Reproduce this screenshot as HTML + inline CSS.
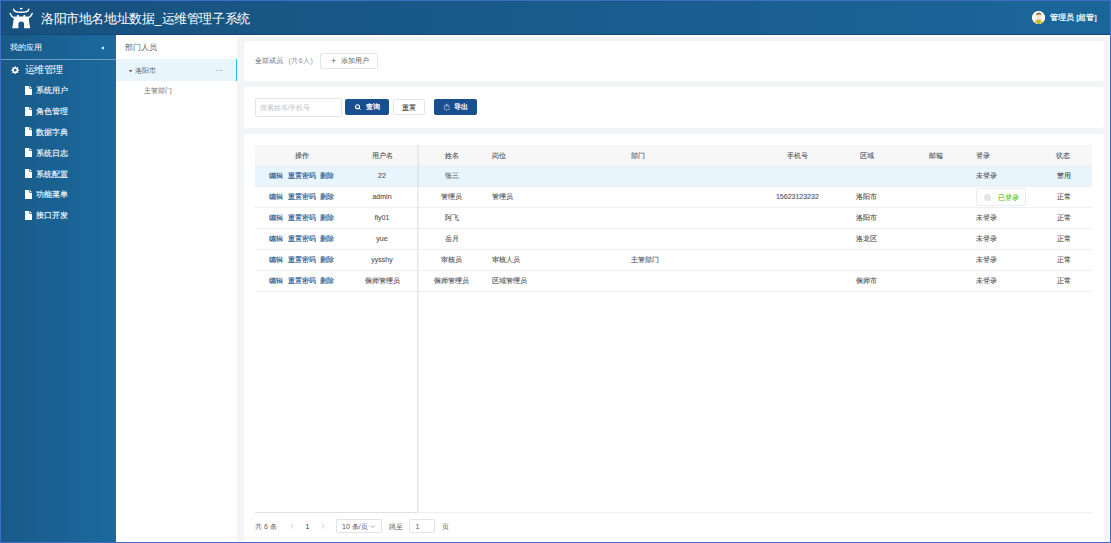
<!DOCTYPE html>
<html><head><meta charset="utf-8">
<style>
*{box-sizing:border-box;margin:0;padding:0}
html,body{width:1111px;height:543px;overflow:hidden;background:#fff}
body{font-family:"Liberation Sans",sans-serif;position:relative;color:#606266}
.abs{position:absolute}
.frame{position:absolute;left:0;top:0;width:1111px;height:543px;border:1px solid #3f6dc6;pointer-events:none;z-index:50}
.hdr{position:absolute;left:0;top:0;width:1111px;height:35px;background:linear-gradient(90deg,#17517f,#1b6699);border-bottom:1px solid #124872}
.title{position:absolute;left:41px;top:10.8px;font-size:26px;line-height:30px;color:#fff;white-space:nowrap;transform:scale(0.485);transform-origin:0 0}
.user{position:absolute;left:1050px;top:12.3px;font-size:8px;line-height:12px;color:#fff;white-space:nowrap;-webkit-text-stroke:0.2px #fff}
.avatar{position:absolute;left:1031.6px;top:10.9px;width:13.5px;height:13.5px;border-radius:50%;background:#fff;overflow:hidden}
.side{position:absolute;left:0;top:35px;width:116px;height:508px;background:linear-gradient(90deg,#195a88,#1b699e)}
.side .app{position:absolute;left:10px;top:42px;font-size:8px;line-height:12px;color:#fff}
.side .line{position:absolute;left:0;top:58px;width:116px;height:1px;background:#6a9cc4}
.mi{position:absolute;left:36px;font-size:8px;line-height:12px;color:#fff;white-space:nowrap;-webkit-text-stroke:0.12px #fff}
.fi{position:absolute;left:25px;width:7px;height:9px;background:#fff;clip-path:polygon(0 0,64% 0,100% 32%,100% 100%,0 100%)}
.fi:after{content:"";position:absolute;left:4.2px;top:0;width:2.8px;height:2.9px;background:#1a5f91;clip-path:polygon(0 0,100% 100%,0 100%)}
.tree{position:absolute;left:116px;top:35px;width:121px;height:508px;background:#fff}
.main{position:absolute;left:237px;top:37px;width:872px;height:504px;background:#f3f4f6}
.card{position:absolute;left:7px;width:860px;background:#fff;border-radius:3px}
.btn{position:absolute;border:1px solid #e2e4e8;border-radius:2px;background:#fff;font-size:7px;line-height:14px;color:#606266;white-space:nowrap}
.pbtn{position:absolute;border-radius:2px;background:#1a4f8f;color:#fff;font-size:7px;white-space:nowrap}
table{border-collapse:collapse}
.tbl{position:absolute;left:12px;top:11px;width:837px}
.th{position:absolute;font-size:7px;line-height:10px;color:#4f5257;-webkit-text-stroke:0.1px currentColor;white-space:nowrap}
.td{position:absolute;font-size:7px;line-height:10px;color:#55585d;-webkit-text-stroke:0.12px currentColor;white-space:nowrap}
.lk{color:#2a5a94;-webkit-text-stroke:0.15px currentColor}
.rowline{position:absolute;left:0;width:837px;height:1px;background:#eeeff1}
</style></head><body>
<div class="hdr">
  <svg class="abs" style="left:6px;top:4px" width="32" height="28" viewBox="0 0 32 28">
    <g fill="#fff">
      <ellipse cx="15.2" cy="4.6" rx="1.45" ry="0.9"/>
    </g>
    <g fill="none" stroke="#fff" stroke-width="1.45" stroke-linecap="round">
      <path d="M7.6 5.3 C8.2 8.2 11 8.3 15.2 8.3 C19.4 8.3 22.2 8.2 22.8 5.3"/>
      <path d="M4.2 9.4 Q5.2 12.3 8.2 13.8"/>
      <path d="M26.2 9.4 Q25.2 12.3 22.2 13.8"/>
    </g>
    <path fill="#fff" d="M8 12.6 L11.1 12.6 L11.1 11.1 L12.9 11.1 L12.9 12.6 L17.5 12.6 L17.5 11.1 L19.3 11.1 L19.3 12.6 L22.7 12.6 Q23 19 24.2 24.2 L18.1 24.2 L18.1 20.4 A2.85 2.85 0 0 0 12.4 20.4 L12.4 24.2 L6.2 24.2 Q7.4 19 8 12.6Z"/>
  </svg>
  <div class="title">洛阳市地名地址数据_运维管理子系统</div>
  <div class="avatar">
    <svg width="13.5" height="13.5" viewBox="0 0 13.5 13.5">
      <circle cx="6.75" cy="6.75" r="6.75" fill="#fff"/>
      <path d="M2.4 13 Q2.6 8.8 5.2 8.3 L8.2 8.3 Q10.8 8.8 11 13Z" fill="#f2c04c"/>
      <path d="M5.2 13 L5.4 8.6 L8 8.6 L8.2 13Z" fill="#9fc43e"/>
      <rect x="5.9" y="7.2" width="1.6" height="1.6" fill="#f8dcc0"/>
      <ellipse cx="6.7" cy="5.6" rx="2.4" ry="2.7" fill="#fce6cf"/>
      <path d="M4 5.2 Q3.6 2 6.4 1.6 Q9.6 1.5 9.4 4.4 Q8.8 3.2 7.4 3.5 Q5.6 3.4 4.6 3.8Z" fill="#a4582b"/>
    </svg>
  </div>
  <div class="user">管理员 [超管]</div>
</div>

<div class="side">
  <div class="app" style="top:7px">我的应用</div>
  <svg class="abs" style="left:100.6px;top:10.7px" width="3" height="4" viewBox="0 0 3 4"><path d="M2.8 0.2 L0.2 2 L2.8 3.8Z" fill="#fff"/></svg>
  <div class="line" style="top:24px"></div>
  <svg class="abs" style="left:11.3px;top:30.8px" width="8.4" height="8.4" viewBox="0 0 16 16"><path fill="#fff" fill-rule="evenodd" d="M13.45 6.69 L15.53 6.99 L15.53 9.01 L13.45 9.31 L12.77 10.93 L14.04 12.61 L12.61 14.04 L10.93 12.77 L9.31 13.45 L9.01 15.53 L6.99 15.53 L6.69 13.45 L5.07 12.77 L3.39 14.04 L1.96 12.61 L3.23 10.93 L2.55 9.31 L0.47 9.01 L0.47 6.99 L2.55 6.69 L3.23 5.07 L1.96 3.39 L3.39 1.96 L5.07 3.23 L6.69 2.55 L6.99 0.47 L9.01 0.47 L9.31 2.55 L10.93 3.23 L12.61 1.96 L14.04 3.39 L12.77 5.07Z M8 5.4 A2.6 2.6 0 1 0 8 10.6 A2.6 2.6 0 1 0 8 5.4Z"/></svg>
  <div class="mi" style="left:25px;top:28.2px;font-size:10px;line-height:13px;letter-spacing:-0.75px;-webkit-text-stroke:0">运维管理</div>
  <svg class="abs" style="left:25px;top:50.8px" width="7" height="9" viewBox="0 0 7 9"><path d="M0 0 L4.3 0 L4.3 2.7 L7 2.7 L7 9 L0 9Z" fill="#fff"/><path d="M5 0.2 L6.9 2.1 L5 2.1Z" fill="#fff"/></svg><div class="mi" style="top:50.4px">系统用户</div>
  <svg class="abs" style="left:25px;top:71.6px" width="7" height="9" viewBox="0 0 7 9"><path d="M0 0 L4.3 0 L4.3 2.7 L7 2.7 L7 9 L0 9Z" fill="#fff"/><path d="M5 0.2 L6.9 2.1 L5 2.1Z" fill="#fff"/></svg><div class="mi" style="top:71.2px">角色管理</div>
  <svg class="abs" style="left:25px;top:92.4px" width="7" height="9" viewBox="0 0 7 9"><path d="M0 0 L4.3 0 L4.3 2.7 L7 2.7 L7 9 L0 9Z" fill="#fff"/><path d="M5 0.2 L6.9 2.1 L5 2.1Z" fill="#fff"/></svg><div class="mi" style="top:92.0px">数据字典</div>
  <svg class="abs" style="left:25px;top:113.2px" width="7" height="9" viewBox="0 0 7 9"><path d="M0 0 L4.3 0 L4.3 2.7 L7 2.7 L7 9 L0 9Z" fill="#fff"/><path d="M5 0.2 L6.9 2.1 L5 2.1Z" fill="#fff"/></svg><div class="mi" style="top:112.8px">系统日志</div>
  <svg class="abs" style="left:25px;top:134.0px" width="7" height="9" viewBox="0 0 7 9"><path d="M0 0 L4.3 0 L4.3 2.7 L7 2.7 L7 9 L0 9Z" fill="#fff"/><path d="M5 0.2 L6.9 2.1 L5 2.1Z" fill="#fff"/></svg><div class="mi" style="top:133.6px">系统配置</div>
  <svg class="abs" style="left:25px;top:154.8px" width="7" height="9" viewBox="0 0 7 9"><path d="M0 0 L4.3 0 L4.3 2.7 L7 2.7 L7 9 L0 9Z" fill="#fff"/><path d="M5 0.2 L6.9 2.1 L5 2.1Z" fill="#fff"/></svg><div class="mi" style="top:154.4px">功能菜单</div>
  <svg class="abs" style="left:25px;top:175.6px" width="7" height="9" viewBox="0 0 7 9"><path d="M0 0 L4.3 0 L4.3 2.7 L7 2.7 L7 9 L0 9Z" fill="#fff"/><path d="M5 0.2 L6.9 2.1 L5 2.1Z" fill="#fff"/></svg><div class="mi" style="top:175.2px">接口开发</div>
</div>

<div class="tree">
  <div class="abs" style="left:9px;top:6.5px;font-size:8px;line-height:12px;color:#606266">部门人员</div>
  <div class="abs" style="left:0;top:24.2px;width:121px;height:21.8px;background:#e8f5fc;border-right:1.2px solid #2dbdea"></div>
  <svg class="abs" style="left:12.8px;top:34.6px" width="3.4" height="2.2" viewBox="0 0 3.4 2.2"><path d="M0 0 L3.4 0 L1.7 2.2Z" fill="#555"/></svg>
  <div class="abs" style="left:19.3px;top:30.5px;font-size:7px;line-height:10px;color:#606266">洛阳市</div>
  <div class="abs" style="left:99.5px;top:31px;font-size:7px;line-height:10px;color:#606266;letter-spacing:0">···</div>
  <div class="abs" style="left:27.5px;top:50.7px;font-size:7px;line-height:10px;color:#606266">主管部门</div>
</div>

<div class="main">
  <div class="card" style="top:4px;height:40px">
    <div class="abs" style="left:11px;top:15px;font-size:7px;line-height:10px;color:#606266">全部成员</div>
    <div class="abs" style="left:44.6px;top:15px;font-size:7px;line-height:10px;color:#909399;letter-spacing:0.45px">(共6人)</div>
    <div class="btn" style="left:76px;top:12px;width:57.5px;height:16.2px">
      <span class="abs" style="left:10px;top:0;font-size:9px;line-height:14px">+</span>
      <span class="abs" style="left:20px;top:0">添加用户</span>
    </div>
  </div>
  <div class="card" style="top:49.5px;height:41.5px">
    <div class="abs" style="left:11px;top:11.5px;width:86.5px;height:18.5px;border:1px solid #e2e4e8;border-radius:2px">
      <span class="abs" style="left:3.5px;top:3.5px;font-size:7px;line-height:10px;color:#c0c4cc;white-space:nowrap">搜索姓名/手机号</span>
    </div>
    <div class="pbtn" style="left:101px;top:12.4px;width:44px;height:16px">
      <svg class="abs" style="left:9px;top:4px" width="8" height="8" viewBox="0 0 8 8"><circle cx="3.5" cy="3.7" r="2" fill="none" stroke="#fff" stroke-width="1.1"/><path d="M4.9 5.1 L6.3 6.6" stroke="#fff" stroke-width="1" stroke-linecap="round"/></svg>
      <span class="abs" style="left:20.5px;top:3.5px;line-height:10px;-webkit-text-stroke:0.25px #fff">查询</span>
    </div>
    <div class="btn" style="left:148.6px;top:12.4px;width:32.4px;height:16.2px">
      <span class="abs" style="left:8.7px;top:3px;line-height:10px;color:#4a4a4a;-webkit-text-stroke:0.1px #4a4a4a">重置</span>
    </div>
    <div class="pbtn" style="left:190px;top:12.4px;width:43.2px;height:16px">
      <svg class="abs" style="left:9px;top:4px" width="8" height="8" viewBox="0 0 8 8"><rect x="1.4" y="2" width="4.8" height="4.8" rx="1.2" fill="none" stroke="rgba(255,255,255,0.6)" stroke-width="0.8"/><path d="M3.8 0.8 L3.8 3.8" stroke="rgba(255,255,255,0.75)" stroke-width="0.8"/></svg>
      <span class="abs" style="left:19.5px;top:3.5px;line-height:10px;-webkit-text-stroke:0.25px #fff">导出</span>
    </div>
  </div>
  <div class="card" style="top:97px;height:420px">
  </div>
</div>

<div class="tblwrap">
<div class="abs" style="left:255px;top:145px;width:837px;height:20.4px;background:#f7f7f7"></div>
<div class="abs" style="left:255px;top:165.4px;width:837px;height:21.1px;background:#e9f5fd"></div>
<div class="rowline" style="left:255px;top:164.9px"></div>
<div class="rowline" style="left:255px;top:186.0px"></div>
<div class="rowline" style="left:255px;top:207.0px"></div>
<div class="rowline" style="left:255px;top:228.0px"></div>
<div class="rowline" style="left:255px;top:249.0px"></div>
<div class="rowline" style="left:255px;top:270.0px"></div>
<div class="rowline" style="left:255px;top:290.8px"></div>
<div class="th" style="left:251.5px;width:100px;text-align:center;top:150.9px">操作</div>
<div class="th" style="left:332.0px;width:100px;text-align:center;top:150.9px">用户名</div>
<div class="th" style="left:401.7px;width:100px;text-align:center;top:150.9px">姓名</div>
<div class="th" style="left:492.4px;top:150.9px">岗位</div>
<div class="th" style="left:630.8px;top:150.9px">部门</div>
<div class="th" style="left:747.4px;width:100px;text-align:center;top:150.9px">手机号</div>
<div class="th" style="left:816.9px;width:100px;text-align:center;top:150.9px">区域</div>
<div class="th" style="left:886.3px;width:100px;text-align:center;top:150.9px">邮箱</div>
<div class="th" style="left:976.4px;top:150.9px">登录</div>
<div class="th" style="left:1056.1px;top:150.9px">状态</div>
<div class="td lk" style="left:269.1px;top:171.0px">编辑</div>
<div class="td lk" style="left:287.6px;top:171.0px">重置密码</div>
<div class="td lk" style="left:319.7px;top:171.0px">删除</div>
<div class="td" style="left:332.0px;width:100px;text-align:center;top:171.1px">22</div>
<div class="td" style="left:401.7px;width:100px;text-align:center;top:171.1px">张三</div>
<div class="td" style="left:976.4px;top:171.1px">未登录</div>
<div class="td" style="left:1056.5px;top:171.1px">禁用</div>
<div class="td lk" style="left:269.1px;top:192.0px">编辑</div>
<div class="td lk" style="left:287.6px;top:192.0px">重置密码</div>
<div class="td lk" style="left:319.7px;top:192.0px">删除</div>
<div class="td" style="left:332.0px;width:100px;text-align:center;top:192.1px">admin</div>
<div class="td" style="left:401.7px;width:100px;text-align:center;top:192.1px">管理员</div>
<div class="td" style="left:492.4px;top:192.1px">管理员</div>
<div class="td" style="left:747.4px;width:100px;text-align:center;top:192.1px">15623123232</div>
<div class="td" style="left:816.9px;width:100px;text-align:center;top:192.1px">洛阳市</div>
<div class="abs" style="left:976.4px;top:188.2px;width:49.4px;height:18.2px;border:1px solid #ecedf0;border-radius:2.5px;background:#fff"></div>
<div class="abs" style="left:984px;top:194px;width:7px;height:7px;border-radius:50%;background:#e4e5e8"></div>
<div class="td" style="left:997.9px;top:192.5px;color:#52c41a">已登录</div>
<div class="td" style="left:1056.5px;top:192.1px">正常</div>
<div class="td lk" style="left:269.1px;top:213.0px">编辑</div>
<div class="td lk" style="left:287.6px;top:213.0px">重置密码</div>
<div class="td lk" style="left:319.7px;top:213.0px">删除</div>
<div class="td" style="left:332.0px;width:100px;text-align:center;top:213.1px">fly01</div>
<div class="td" style="left:401.7px;width:100px;text-align:center;top:213.1px">阿飞</div>
<div class="td" style="left:816.9px;width:100px;text-align:center;top:213.1px">洛阳市</div>
<div class="td" style="left:976.4px;top:213.1px">未登录</div>
<div class="td" style="left:1056.5px;top:213.1px">正常</div>
<div class="td lk" style="left:269.1px;top:234.0px">编辑</div>
<div class="td lk" style="left:287.6px;top:234.0px">重置密码</div>
<div class="td lk" style="left:319.7px;top:234.0px">删除</div>
<div class="td" style="left:332.0px;width:100px;text-align:center;top:234.1px">yue</div>
<div class="td" style="left:401.7px;width:100px;text-align:center;top:234.1px">岳月</div>
<div class="td" style="left:816.9px;width:100px;text-align:center;top:234.1px">洛龙区</div>
<div class="td" style="left:976.4px;top:234.1px">未登录</div>
<div class="td" style="left:1056.5px;top:234.1px">正常</div>
<div class="td lk" style="left:269.1px;top:255.0px">编辑</div>
<div class="td lk" style="left:287.6px;top:255.0px">重置密码</div>
<div class="td lk" style="left:319.7px;top:255.0px">删除</div>
<div class="td" style="left:332.0px;width:100px;text-align:center;top:255.1px">yysshy</div>
<div class="td" style="left:401.7px;width:100px;text-align:center;top:255.1px">审核员</div>
<div class="td" style="left:492.4px;top:255.1px">审核人员</div>
<div class="td" style="left:630.8px;top:255.1px">主管部门</div>
<div class="td" style="left:976.4px;top:255.1px">未登录</div>
<div class="td" style="left:1056.5px;top:255.1px">正常</div>
<div class="td lk" style="left:269.1px;top:276.0px">编辑</div>
<div class="td lk" style="left:287.6px;top:276.0px">重置密码</div>
<div class="td lk" style="left:319.7px;top:276.0px">删除</div>
<div class="td" style="left:332.0px;width:100px;text-align:center;top:276.1px">偃师管理员</div>
<div class="td" style="left:401.7px;width:100px;text-align:center;top:276.1px">偃师管理员</div>
<div class="td" style="left:492.4px;top:276.1px">区域管理员</div>
<div class="td" style="left:816.9px;width:100px;text-align:center;top:276.1px">偃师市</div>
<div class="td" style="left:976.4px;top:276.1px">未登录</div>
<div class="td" style="left:1056.5px;top:276.1px">正常</div>
<div class="abs" style="left:416.5px;top:145px;width:1.2px;height:367px;background:#e6e6e6;box-shadow:1px 0 1.5px rgba(0,0,0,0.07)"></div>
<div class="abs" style="left:255px;top:512px;width:837px;height:1px;background:#eeeff1"></div><div class="abs" style="left:255px;top:512px;width:161.5px;height:1px;background:#dfe0e3"></div>
<div class="td" style="left:255.1px;top:521.8px;-webkit-text-stroke:0;color:#606266">共 6 条</div>
<svg class="abs" style="left:289.5px;top:523px" width="4" height="6" viewBox="0 0 4 6"><path d="M3.2 0.5 L0.8 3 L3.2 5.5" fill="none" stroke="#c0c4cc" stroke-width="0.8"/></svg>
<div class="td" style="left:305.5px;top:521.8px;-webkit-text-stroke:0;color:#303133">1</div>
<svg class="abs" style="left:321px;top:523px" width="4" height="6" viewBox="0 0 4 6"><path d="M0.8 0.5 L3.2 3 L0.8 5.5" fill="none" stroke="#c0c4cc" stroke-width="0.8"/></svg>
<div class="abs" style="left:336px;top:519.2px;width:45.5px;height:14.2px;border:1px solid #e2e4e8;border-radius:2px"></div>
<div class="td" style="left:342px;top:521.8px;-webkit-text-stroke:0">10 条/页</div>
<svg class="abs" style="left:370px;top:525px" width="5" height="3" viewBox="0 0 5 3"><path d="M0.5 0.5 L2.5 2.5 L4.5 0.5" fill="none" stroke="#909399" stroke-width="0.8"/></svg>
<div class="td" style="left:389.2px;top:521.8px;-webkit-text-stroke:0">跳至</div>
<div class="abs" style="left:409.4px;top:519.2px;width:25.2px;height:14.2px;border:1px solid #e2e4e8;border-radius:2px"></div>
<div class="td" style="left:415.5px;top:521.8px;-webkit-text-stroke:0">1</div>
<div class="td" style="left:441.6px;top:521.8px;-webkit-text-stroke:0">页</div>
</div>
<div class="frame"></div>
</body></html>
